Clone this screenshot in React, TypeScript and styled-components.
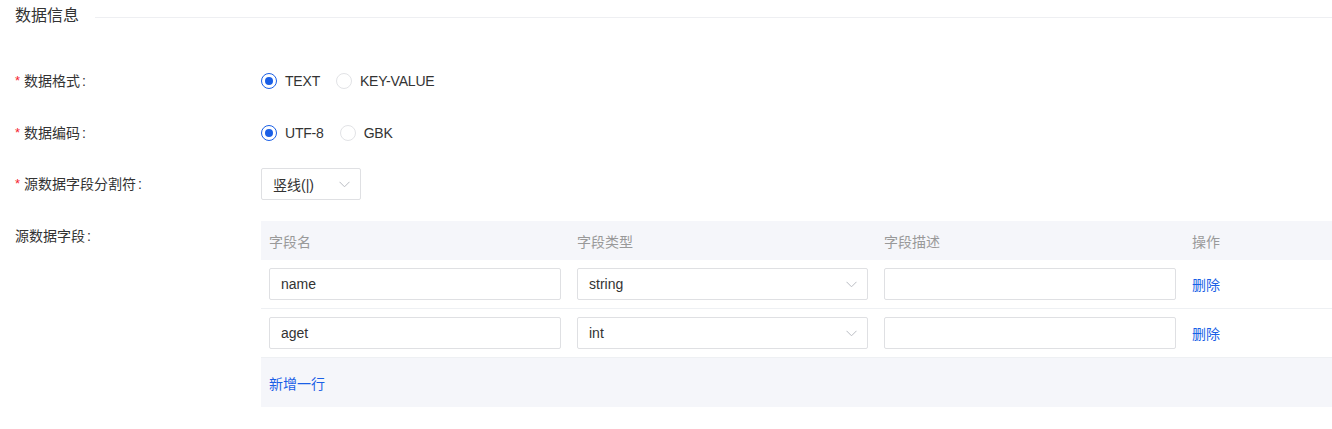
import React from "react";
import styled, { createGlobalStyle } from "styled-components";

const Global = createGlobalStyle`
  html, body { margin: 0; padding: 0; background: #fff; }
  body { font-family: "Liberation Sans", "Noto Sans CJK SC", Arial, sans-serif; color: #333; font-size: 14px; }
  * { box-sizing: border-box; }
`;

const Page = styled.div`
  width: 1332px;
  padding: 0 0 0 15px;
`;

const TitleBar = styled.div`
  display: flex;
  align-items: center;
  height: 34px;
`;

const Title = styled.div`
  font-size: 16px;
  color: #333;
  line-height: 18px;
  margin-top: -2px;
`;

const TitleLine = styled.div`
  flex: 1;
  height: 1px;
  background: #eeeff2;
  margin-left: 16px;
`;

const Form = styled.div`
  display: flex;
  flex-direction: column;
  padding-top: 30px;
`;

const Row = styled.div<{ $h: number }>`
  display: grid;
  grid-template-columns: 246px 1fr;
  align-items: center;
  min-height: ${(p) => p.$h}px;
`;

const TopRow = styled.div`
  display: grid;
  grid-template-columns: 246px 1fr;
  align-items: start;
`;

const Label = styled.div`
  font-size: 14px;
  color: #333;
  white-space: nowrap;
  display: flex;
  align-items: center;
  line-height: 20px;
`;

const Colon = styled.span`
  margin-left: 2px;
`;

const Star = styled.span`
  color: #f5222d;
  margin-right: 4px;
  font-size: 13px;
`;

const RadioGroup = styled.div`
  display: flex;
  align-items: center;
  gap: 16px;
`;

const RadioItem = styled.label`
  display: flex;
  align-items: center;
  gap: 8px;
  font-size: 14px;
  letter-spacing: -0.2px;
  color: #333;
`;

const Circle = styled.span<{ $on?: boolean }>`
  width: 16px;
  height: 16px;
  border-radius: 50%;
  border: 1px solid ${(p) => (p.$on ? "#1a5fe6" : "#e2e3e6")};
  display: flex;
  align-items: center;
  justify-content: center;
  &::after {
    content: "";
    width: 8px;
    height: 8px;
    border-radius: 50%;
    background: ${(p) => (p.$on ? "#1a5fe6" : "transparent")};
  }
`;

const Select = styled.div<{ $w?: string }>`
  width: ${(p) => p.$w ?? "100px"};
  height: 32px;
  border: 1px solid #dfe0e3;
  border-radius: 2px;
  display: flex;
  align-items: center;
  justify-content: space-between;
  padding: 0 10px 0 11px;
  font-size: 14px;
  color: #333;
  background: #fff;
`;

const Chev = () => (
  <svg width="11" height="7" viewBox="0 0 11 7" fill="none">
    <path d="M0.5 0.8 L5.5 5.8 L10.5 0.8" stroke="#b9bcc2" strokeWidth="1" />
  </svg>
);

const Table = styled.div`
  width: 1071px;
  display: flex;
  flex-direction: column;
`;

const Grid = styled.div<{ $bg?: boolean; $h: number; $border?: boolean }>`
  display: grid;
  grid-template-columns: 308px 307px 308px 1fr;
  align-items: center;
  height: ${(p) => p.$h}px;
  background: ${(p) => (p.$bg ? "#f5f6fa" : "#fff")};
  border-bottom: ${(p) => (p.$border ? "1px solid #eef0f3" : "none")};
`;

const Cell = styled.div`
  padding: 0 8px;
`;

const HeadCell = styled(Cell)`
  color: #999;
  font-size: 14px;
`;

const Input = styled.div`
  height: 32px;
  border: 1px solid #dfe0e3;
  border-radius: 2px;
  display: flex;
  align-items: center;
  padding: 0 11px;
  font-size: 14px;
  color: #333;
  background: #fff;
`;

const Link = styled.span`
  color: #1a5fe6;
  font-size: 14px;
`;

const Footer = styled.div`
  height: 49px;
  background: #f5f6fa;
  display: flex;
  align-items: center;
  padding-left: 8px;
`;

const rows = [
  { name: "name", type: "string" },
  { name: "aget", type: "int" },
];

export default function App() {
  return (
    <Page>
      <Global />
      <TitleBar>
        <Title>数据信息</Title>
        <TitleLine />
      </TitleBar>
      <Form>
        <Row $h={34}>
          <Label>
            <Star>*</Star>数据格式<Colon>:</Colon>
          </Label>
          <RadioGroup>
            <RadioItem>
              <Circle $on />
              TEXT
            </RadioItem>
            <RadioItem>
              <Circle />
              KEY-VALUE
            </RadioItem>
          </RadioGroup>
        </Row>
        <Row $h={34} style={{ marginTop: 18 }}>
          <Label>
            <Star>*</Star>数据编码<Colon>:</Colon>
          </Label>
          <RadioGroup>
            <RadioItem>
              <Circle $on />
              UTF-8
            </RadioItem>
            <RadioItem>
              <Circle />
              GBK
            </RadioItem>
          </RadioGroup>
        </Row>
        <Row $h={32} style={{ marginTop: 18 }}>
          <Label>
            <Star>*</Star>源数据字段分割符<Colon>:</Colon>
          </Label>
          <Select>
            竖线(|)
            <Chev />
          </Select>
        </Row>
        <TopRow style={{ marginTop: 21 }}>
          <Label style={{ marginTop: 5 }}>
            源数据字段<Colon>:</Colon>
          </Label>
          <Table>
            <Grid $bg $h={39}>
              <HeadCell>字段名</HeadCell>
              <HeadCell>字段类型</HeadCell>
              <HeadCell>字段描述</HeadCell>
              <HeadCell>操作</HeadCell>
            </Grid>
            {rows.map((r) => (
              <Grid key={r.name} $h={49} $border>
                <Cell>
                  <Input>{r.name}</Input>
                </Cell>
                <Cell>
                  <Select $w="100%">
                    {r.type}
                    <Chev />
                  </Select>
                </Cell>
                <Cell>
                  <Input />
                </Cell>
                <Cell>
                  <Link>删除</Link>
                </Cell>
              </Grid>
            ))}
            <Footer>
              <Link>新增一行</Link>
            </Footer>
          </Table>
        </TopRow>
      </Form>
    </Page>
  );
}
